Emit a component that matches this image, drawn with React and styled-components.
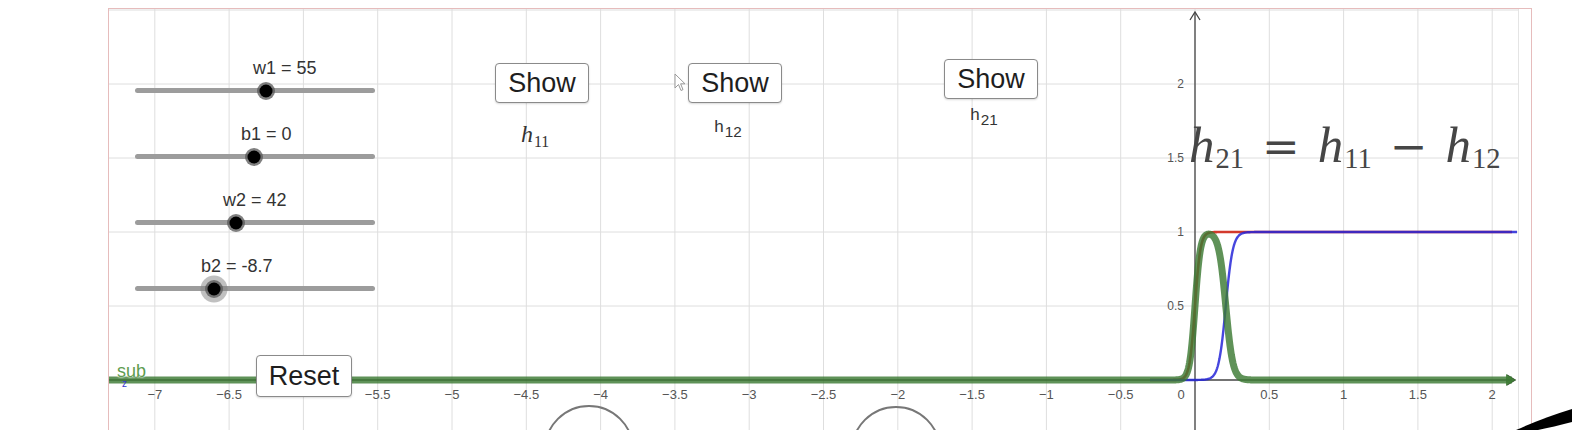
import React from "react";
import styled, { createGlobalStyle } from "styled-components";

// graph view origin on the page, and the axis scale
const OX = 109;
const OY = 9;
const CX = 1195;
const CY = 380;
const SX = 148.6;
const SY = 148;

const toPy = (y) => CY - y * SY;
const sigmoid = (t) => 1 / (1 + Math.exp(-t));
const h11 = (x) => sigmoid(55 * x);
const h12 = (x) => sigmoid(42 * x - 8.7);
const h21 = (x) => h11(x) - h12(x);

const curve = (f, from = OX, to = 1512) => {
  const pts = [];
  for (let px = from; px <= to; px += 0.5) {
    pts.push(`${px.toFixed(1)},${toPy(f((px - CX) / SX)).toFixed(1)}`);
  }
  return "M" + pts.join(" L");
};

const fmt = (v) => (v < 0 ? "\u2212" : "") + String(Math.abs(v));

const xSteps = Array.from({ length: 19 }, (_, i) => i - 14); // -7 .. 2 in halves
const ySteps = [1, 2, 3, 4, 5];

const sliders = [
  { name: "w1", value: "55", pos: 0.546 },
  { name: "b1", value: "0", pos: 0.496 },
  { name: "w2", value: "42", pos: 0.421 },
  { name: "b2", value: "-8.7", pos: 0.329, active: true },
];

const GlobalStyle = createGlobalStyle`
  html, body {
    margin: 0;
    background: #fff;
    overflow: hidden;
  }
  body {
    font-family: "Liberation Sans", Arial, sans-serif;
  }
`;

const Page = styled.div`
  position: relative;
  width: 1572px;
  height: 430px;
  padding: 8px 0 0 108px;
  box-sizing: border-box;
  overflow: hidden;
`;

const Frame = styled.div`
  width: 1424px;
  height: 422px;
  border: 1px solid #e6bcbc;
  border-bottom: none;
  box-sizing: border-box;
  display: flex;
`;

const GraphView = styled.div`
  position: relative;
  width: 1410px;
  height: 100%;
  border-right: 1px solid #e4e4e4;
  box-sizing: border-box;
  overflow: hidden;
`;

const Chart = styled.svg`
  display: block;
  font-family: "Liberation Sans", Arial, sans-serif;
`;

const SliderStack = styled.div`
  position: absolute;
  left: 26px;
  top: 49px;
  width: 240px;
  display: flex;
  flex-direction: column;
`;

const SliderRow = styled.div`
  height: 66px;
  display: flex;
  flex-direction: column;
`;

const SliderCaption = styled.div`
  height: 20px;
  line-height: 20px;
  font-size: 18px;
  color: #333;
  white-space: nowrap;
`;

const Track = styled.div`
  position: relative;
  margin-top: 10px;
  height: 5px;
  border-radius: 3px;
  background: #9c9c9c;
`;

const Knob = styled.span`
  position: absolute;
  top: 50%;
  width: 13px;
  height: 13px;
  border-radius: 50%;
  background: #000;
  transform: translate(-50%, -50%);
  box-shadow: 0 0 0 2.5px rgba(85, 85, 85, 0.75)
    ${(p) => (p.$active ? ", 0 0 0 7px rgba(130, 130, 130, 0.5)" : "")};
`;

const ToggleGroup = styled.div`
  position: absolute;
  left: ${(p) => p.$x - OX}px;
  top: ${(p) => p.$y - OY}px;
  width: 94px;
  display: flex;
  flex-direction: column;
  align-items: center;
  gap: ${(p) => p.$gap}px;
`;

const Button = styled.button`
  width: ${(p) => p.$w}px;
  height: ${(p) => p.$h}px;
  padding: 0;
  background: #fff;
  border: 1.5px solid #8a8a8a;
  border-radius: 4px;
  box-shadow: 0 1px 2px rgba(0, 0, 0, 0.15);
  font-family: "Liberation Sans", Arial, sans-serif;
  font-size: 27px;
  color: #1e1e1e;
  line-height: 1;
`;

const ResetButton = styled(Button)`
  position: absolute;
  left: ${256 - OX}px;
  top: ${355 - OY}px;
`;

const FnLabel = styled.div`
  margin-right: 14px;
  white-space: nowrap;
  color: #333;
  font-family: ${(p) =>
    p.$math ? '"Liberation Serif", "Times New Roman", serif' : '"Liberation Sans", Arial, sans-serif'};
  font-size: ${(p) => (p.$math ? 24 : 17)}px;
  font-style: ${(p) => (p.$math ? "italic" : "normal")};
  line-height: 1;
`;

const Sub = styled.span`
  position: relative;
  top: ${(p) => p.$drop}em;
  font-style: normal;
  font-size: ${(p) => p.$size}em;
  margin-left: 1px;
`;

const Equation = styled.div`
  position: absolute;
  left: ${1189 - OX}px;
  top: ${120 - OY}px;
  white-space: nowrap;
  color: #464646;
  font-family: "Liberation Serif", "Times New Roman", serif;
  font-size: 51px;
  font-style: italic;
  line-height: 1;
`;

const Op = styled.span`
  display: inline-block;
  font-family: "DejaVu Serif", serif;
  font-style: normal;
  font-size: 45px;
  margin: 0 ${(p) => p.$space}px;
`;

const CurveLabel = styled.div`
  position: absolute;
  left: ${117 - OX}px;
  top: ${361 - OY}px;
  color: #5e9c50;
  font-size: 18px;
  line-height: 20px;
  text-shadow: 0 0 2px #fff, 0 0 2px #fff;
`;

const CurveMark = styled.span`
  position: absolute;
  left: ${122 - OX}px;
  top: ${379 - OY}px;
  font-size: 10px;
  color: #3a3ad0;
  line-height: 1;
`;

const Overlay = styled.svg`
  position: absolute;
  left: ${(p) => p.$x}px;
  top: ${(p) => p.$y}px;
  pointer-events: none;
`;

function Slider({ name, value, pos, active }) {
  return (
    <SliderRow>
      <SliderCaption style={{ paddingLeft: pos * 240 - 13 }}>
        {name} = {value}
      </SliderCaption>
      <Track>
        <Knob $active={active} style={{ left: `${pos * 100}%` }} />
      </Track>
    </SliderRow>
  );
}

function Graph() {
  return (
    <Chart width="1409" height="421" viewBox={`${OX} ${OY} 1409 421`}>
      <g stroke="#dedede" strokeWidth="1">
        {xSteps.map((k) => (
          <line key={k} x1={CX + (k * SX) / 2} y1={OY} x2={CX + (k * SX) / 2} y2={430} />
        ))}
        {ySteps.map((k) => (
          <line key={k} x1={OX} y1={toPy(k / 2)} x2={1518} y2={toPy(k / 2)} />
        ))}
      </g>

      <g fill="none" stroke="#777" strokeWidth="2">
        <circle cx="589" cy="450" r="44" />
        <circle cx="896" cy="451" r="44" />
      </g>

      <g stroke="#444" strokeWidth="1.3" fill="none">
        <line x1={OX} y1={CY} x2={1514} y2={CY} />
        <path d={`M1507 ${CY - 5} L1515 ${CY} L1507 ${CY + 5}`} />
        <line x1={CX} y1={430} x2={CX} y2={13} />
        <path d={`M${CX - 5} 20 L${CX} 12 L${CX + 5} 20`} />
      </g>

      <g fill="#555" fontSize="13" textAnchor="middle">
        {xSteps
          .filter((k) => k !== 0 && k !== -12)
          .map((k) => (
            <text key={k} x={CX + (k * SX) / 2} y="399">
              {fmt(k / 2)}
            </text>
          ))}
        <text x="1181" y="399">0</text>
      </g>
      <g fill="#555" fontSize="12" textAnchor="end">
        {ySteps
          .filter((k) => k < 5)
          .map((k) => (
            <text key={k} x="1184" y={toPy(k / 2) + 4}>
              {k / 2}
            </text>
          ))}
      </g>

      <path d={curve(h11, 1150)} fill="none" stroke="#d33a2c" strokeWidth="2.6" />
      <path d={curve(h12, 1150, 1517)} fill="none" stroke="#2626d8" strokeWidth="2.4" strokeOpacity="0.85" />
      <path
        d={curve(h21)}
        fill="none"
        stroke="#3c7a33"
        strokeWidth="7"
        strokeOpacity="0.82"
        strokeLinejoin="round"
      />
      <path d={`M1506 ${CY - 6} L1516 ${CY} L1506 ${CY + 6} Z`} fill="#3c7a33" fillOpacity="0.85" />
    </Chart>
  );
}

export default function App() {
  return (
    <>
      <GlobalStyle />
      <Page>
        <Frame>
          <GraphView>
            <Graph />

            <SliderStack>
              {sliders.map((s) => (
                <Slider key={s.name} {...s} />
              ))}
            </SliderStack>

            <ToggleGroup $x={495} $y={63} $gap={19}>
              <Button $w={94} $h={40}>Show</Button>
              <FnLabel $math>
                h<Sub $size={0.66} $drop={0.3}>11</Sub>
              </FnLabel>
            </ToggleGroup>
            <ToggleGroup $x={688} $y={63} $gap={15}>
              <Button $w={94} $h={40}>Show</Button>
              <FnLabel>
                h<Sub $size={0.9} $drop={0.35}>12</Sub>
              </FnLabel>
            </ToggleGroup>
            <ToggleGroup $x={944} $y={59} $gap={7}>
              <Button $w={94} $h={40}>Show</Button>
              <FnLabel>
                h<Sub $size={0.9} $drop={0.35}>21</Sub>
              </FnLabel>
            </ToggleGroup>

            <ResetButton $w={96} $h={42}>Reset</ResetButton>

            <Equation>
              h<Sub $size={0.56} $drop={0.2}>21</Sub>
              <Op $space={18}>=</Op>h<Sub $size={0.56} $drop={0.2}>11</Sub>
              <Op $space={18}>{"\u2212"}</Op>h<Sub $size={0.56} $drop={0.2}>12</Sub>
            </Equation>

            <CurveLabel>sub</CurveLabel>
            <CurveMark>z</CurveMark>

            <Overlay $x={674 - OX} $y={73 - OY} width="12" height="19" viewBox="0 0 12 19">
              <path d="M1 1 L1 15 L4.5 11.5 L7 17.5 L9 16.6 L6.6 10.8 L11 10.8 Z" fill="#fff" stroke="#9a9a9a" strokeWidth="1" />
            </Overlay>
          </GraphView>
        </Frame>

        <Overlay $x={1510} $y={398} width="62" height="32" viewBox="0 0 62 32">
          <path d="M6 32 C24 24 42 17 62 11 L62 24 C50 27 38 30 28 32 Z" fill="#000" />
        </Overlay>
      </Page>
    </>
  );
}
